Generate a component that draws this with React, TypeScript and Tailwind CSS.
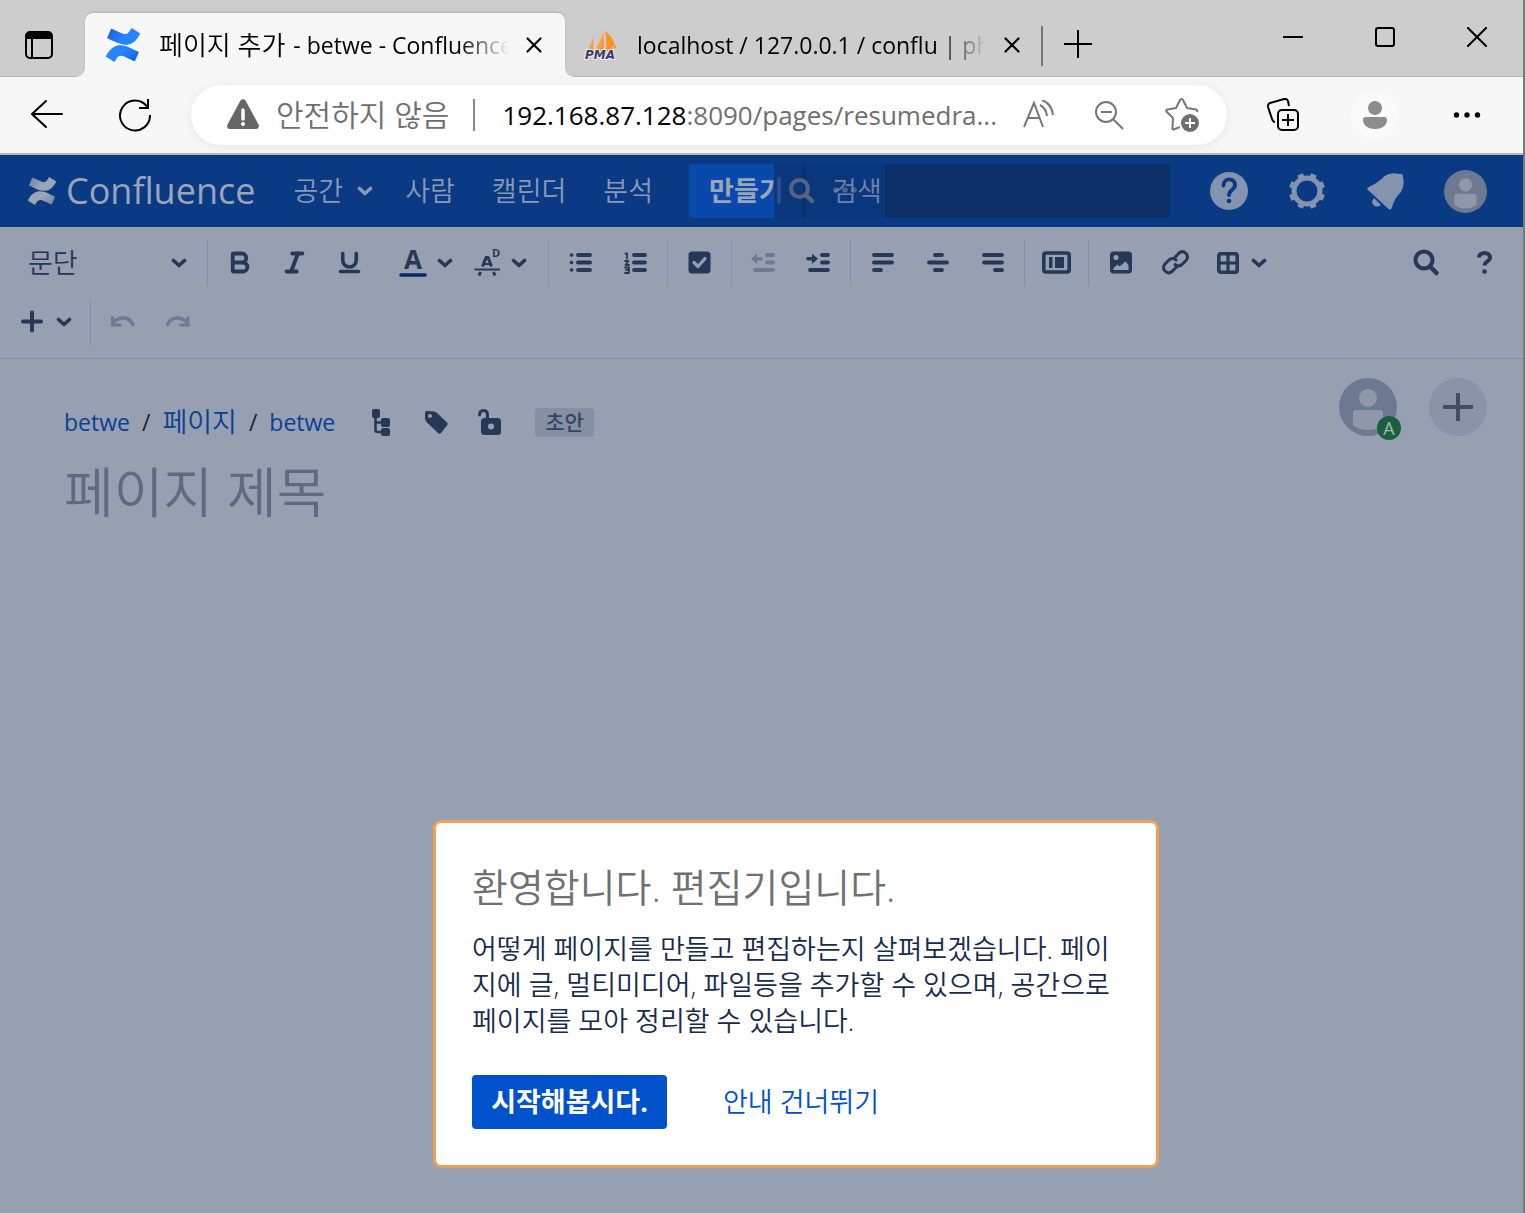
/*
 * Browser window with the Confluence editor and its welcome dialog
 * Page colours are already dimmed by the blanket behind the dialog
 */
import type { ReactNode } from "react";
import { Bold, Italic, Underline, X } from "lucide-react";
import { SiConfluence } from "react-icons/si";

const INK = "#253858";

function Chevron({ className = "" }: { className?: string }) {
  return (
    <svg width="16" height="16" viewBox="0 0 16 16" fill="none" className={className}>
      <path d="M2.5 5.5 8 10.5l5.5-5" stroke="currentColor" strokeWidth="3.6" strokeLinecap="round" strokeLinejoin="round" />
    </svg>
  );
}

function Icon({ children, size = 27 }: { children: ReactNode; size?: number }) {
  return (
    <svg width={size} height={size} viewBox={`0 0 ${size} ${size}`} fill="none" stroke="currentColor" strokeLinecap="round" strokeLinejoin="round" className="overflow-visible">
      {children}
    </svg>
  );
}

function ToolButton({ label, disabled, children }: { label: string; disabled?: boolean; children: ReactNode }) {
  return (
    <button
      type="button"
      aria-label={label}
      disabled={disabled}
      className="flex h-[59px] w-[55px] items-center justify-center disabled:text-[#707a8c]"
    >
      {children}
    </button>
  );
}

function ToolMenu({ label, children }: { label: string; children: ReactNode }) {
  return (
    <button type="button" aria-label={label} className="flex h-[59px] w-[74px] items-center justify-between px-2.5">
      {children}
      <Chevron />
    </button>
  );
}

function Divider() {
  return <span className="mx-1 h-[46px] w-px bg-[#8590a3]" />;
}

function Person({ size, bg, fg }: { size: number; bg: string; fg: string }) {
  return (
    <svg width={size} height={size} viewBox="0 0 58 58">
      <circle cx="29" cy="29" r="29" fill={bg} />
      <circle cx="29" cy="20" r="9" fill={fg} />
      <path d="M14 35a3 3 0 0 1 3-3h24a3 3 0 0 1 3 3v12q-6 5-15 5t-15-5z" fill={fg} />
    </svg>
  );
}

function PmaLogo() {
  return (
    <svg width="34" height="36" viewBox="0 0 34 36">
      <defs>
        <linearGradient id="sail" x1="0" y1="0" x2="1" y2="1">
          <stop offset="0" stopColor="#fcc68c" />
          <stop offset="1" stopColor="#f98b1d" />
        </linearGradient>
      </defs>
      <path d="M9 8Q10 16 9 24H3Q8 17 9 8z" fill="url(#sail)" />
      <path d="M19 3Q21 14 19 24H10Q17 14 19 3z" fill="url(#sail)" />
      <path d="M21 4Q29 10 30 16l3 6-5-3 1 5h-7Q23 13 21 4z" fill="#ff9320" />
      <text x="1" y="32" fontSize="12" fontWeight="700" fontStyle="italic" fontFamily="DejaVu Sans, sans-serif" fill="#3d3866" stroke="#eee" strokeWidth="2" paintOrder="stroke">
        PMA
      </text>
    </svg>
  );
}

function TabStrip() {
  return (
    <div className="flex h-[77px] border-b border-[#b8b8b8] bg-[#cdcdcd] pr-9 text-black">
      <button type="button" aria-label="탭 작업 메뉴" className="mt-[31px] ml-[25px] h-7 w-7">
        <svg width="28" height="28" viewBox="0 0 28 28">
          <rect x="1" y="1" width="26" height="26" rx="4" fill="none" stroke="#000" strokeWidth="2" />
          <path d="M1 8V5a4 4 0 0 1 4-4h18a4 4 0 0 1 4 4v3zM6 7h2v20H6z" fill="#000" />
        </svg>
      </button>
      <div className="relative mt-[13px] ml-8 flex h-16 w-[480px] items-center rounded-t-lg bg-[#f7f7f7] pl-[21px] shadow-[0_-1px_2px_rgba(0,0,0,0.15)]">
        <span className="absolute bottom-0 -left-2 h-2 w-2 bg-[radial-gradient(circle_at_0_0,transparent_7px,#f7f7f7_8px)]" />
        <span className="absolute -right-2 bottom-0 h-2 w-2 bg-[radial-gradient(circle_at_100%_0,transparent_7px,#f7f7f7_8px)]" />
        <SiConfluence size={34} fill="url(#logo-blue)" />
        <span className="ml-[19px] flex h-9 w-[350px] items-center gap-2 text-[23px] leading-9 whitespace-nowrap [mask-image:linear-gradient(to_right,#000_300px,transparent_350px)]">
          <span className="text-[26px] font-[350]">페이지 추가</span>
          <span>- betwe - Confluence</span>
        </span>
        <button type="button" aria-label="탭 닫기" className="ml-3">
          <X size={26} strokeWidth={2} />
        </button>
      </div>
      <div className="mt-[13px] ml-[19px] flex h-16 items-center">
        <PmaLogo />
        <span className="ml-[19px] h-9 w-[350px] text-[23px] leading-9 whitespace-nowrap [mask-image:linear-gradient(to_right,#000_300px,transparent_350px)]">
          localhost / 127.0.0.1 / conflu | php
        </span>
        <button type="button" aria-label="탭 닫기" className="ml-3">
          <X size={26} strokeWidth={2} />
        </button>
      </div>
      <span className="mt-[26px] ml-4 h-10 w-0.5 bg-[#777]" />
      <button type="button" aria-label="새 탭" className="mt-[30px] ml-5 h-7 w-8">
        <svg width="30" height="28" viewBox="0 0 30 28" stroke="#000" strokeWidth="2">
          <path d="M1 14h28M15 0v28" />
        </svg>
      </button>
      <div className="mt-[27px] ml-auto flex h-5 gap-[72px]">
        <button type="button" aria-label="최소화">
          <svg width="20" height="20" stroke="#000" strokeWidth="2"><path d="M0 10h20" /></svg>
        </button>
        <button type="button" aria-label="최대화">
          <svg width="20" height="20" fill="none" stroke="#000" strokeWidth="2"><rect x="1" y="1" width="18" height="18" rx="2" /></svg>
        </button>
        <button type="button" aria-label="닫기">
          <svg width="20" height="20" stroke="#000" strokeWidth="2"><path d="M0 0l20 20M20 0L0 20" /></svg>
        </button>
      </div>
    </div>
  );
}

function AddressBar() {
  return (
    <div className="flex h-[78px] items-center border-b-2 border-[#b9b9b9] bg-[#f7f7f7] pr-[42px] pl-[31px] text-black">
      <button type="button" aria-label="뒤로">
        <svg width="32" height="30" viewBox="0 0 32 30" fill="none" stroke="#000" strokeWidth="2" strokeLinecap="round">
          <path d="M31 14H1M15 1 1 14l14 13" />
        </svg>
      </button>
      <button type="button" aria-label="새로 고침" className="ml-14">
        <svg width="32" height="34" viewBox="0 0 32 34" fill="none" stroke="#000" strokeWidth="2">
          <path d="M28 8.500A15 15 0 1 0 31 17M29 1v9H20" />
        </svg>
      </button>
      <div className="ml-10 flex h-[60px] flex-1 items-center rounded-full bg-white pr-[28px] pl-9 text-[#6f6f6f] shadow-[0_1px_10px_rgba(0,0,0,0.08)]">
        <svg width="32" height="32" viewBox="0 0 32 32">
          <path d="M13.500 1.500a3 3 0 0 1 5 0l13 24a3 3 0 0 1-2.500 4.500H3a3 3 0 0 1-2.500-4.500z" fill="#666" />
          <path d="M16 11v9" stroke="#fff" strokeWidth="3.500" strokeLinecap="round" />
          <circle cx="16" cy="25" r="2" fill="#fff" />
        </svg>
        <span className="ml-[17px] text-[30px] leading-9 font-[350]">안전하지 않음</span>
        <span className="ml-6 h-8 w-0.5 bg-[#8a8a8a]" />
        <span className="ml-[27px] flex-1 text-[26px] leading-9 whitespace-nowrap">
          <span className="text-black">192.168.87.128</span>:8090/pages/resumedra...
        </span>
        <div className="flex items-center gap-10">
          <button type="button" aria-label="소리내어 읽기">
            <svg width="32" height="30" viewBox="0 0 32 30" fill="none" stroke="#777" strokeWidth="2">
              <path d="M1 27 11 3l9 24M5 18h12" />
              <path d="M17 5q6 3 7 11M19 0q10 4 11 15" />
            </svg>
          </button>
          <button type="button" aria-label="축소">
            <svg width="30" height="30" viewBox="0 0 30 30" fill="none" stroke="#777" strokeWidth="2">
              <circle cx="11" cy="12" r="10" />
              <path d="M18 19l10 10M6 12h11" />
            </svg>
          </button>
          <button type="button" aria-label="즐겨찾기에 추가">
            <svg width="34" height="34" viewBox="0 0 34 34" fill="none" stroke="#777" strokeWidth="2" strokeLinejoin="round">
              <path d="M15 29l-6.500 2.500q-1.500 0-1-2L8 20 1.500 13.500q-1-1.500 1-2L11 10l4-8q1.500-2 3 0l4 8 9 1.500q2 1 1 2.500" />
              <circle cx="25" cy="25" r="9" fill="#6f6f6f" stroke="none" />
              <path d="M25 20v10M20 25h10" stroke="#fff" />
            </svg>
          </button>
        </div>
      </div>
      <button type="button" aria-label="컬렉션" className="ml-10">
        <svg width="33" height="34" viewBox="0 0 33 34" fill="none" stroke="#000" strokeWidth="2" strokeLinejoin="round">
          <rect x="11" y="12" width="20" height="20" rx="4" />
          <path d="M21 16v12M15 22h12M8 24q-2 0-3-3L1 9q-.5-3 2-4L17 1q3-.5 4 2l1 5" />
        </svg>
      </button>
      <button type="button" aria-label="프로필" className="ml-[51px] flex h-12 w-12 items-center justify-center rounded-full bg-[#fafafa]">
        <svg width="24" height="28" viewBox="0 0 24 28" fill="#8c8c8c">
          <circle cx="12" cy="7" r="7" />
          <path d="M3 16h18a3 3 0 0 1 3 3c0 6-6 9-12 9s-12-3-12-9a3 3 0 0 1 3-3z" />
        </svg>
      </button>
      <button type="button" aria-label="설정 및 기타" className="ml-[54px]">
        <svg width="28" height="6" viewBox="0 0 28 6">
          <circle cx="3.500" cy="3" r="2.700" />
          <circle cx="14" cy="3" r="2.700" />
          <circle cx="24.500" cy="3" r="2.700" />
        </svg>
      </button>
    </div>
  );
}

function AppHeader() {
  return (
    <header className="flex h-[72px] items-center bg-[#0a3a84] pr-9 pl-7 text-[27px] leading-9 whitespace-nowrap text-[#8a99b5]">
      <a href="#home" className="flex items-center text-[#9aa5b8]">
        <SiConfluence size={28} fill="url(#logo-grey)" />
        <span className="ml-2.5 text-[36px]">Confluence</span>
      </a>
      <nav className="flex shrink-0 items-center font-[350]">
        <a href="#spaces" className="ml-[38px] flex items-center gap-3.5">
          공간
          <Chevron />
        </a>
        <a href="#people" className="ml-8">사람</a>
        <a href="#calendars" className="ml-[37px]">캘린더</a>
        <a href="#analytics" className="ml-[37px]">분석</a>
        <button type="button" className="ml-9 h-[54px] w-[85px] rounded-l bg-[#0a49ac] pl-5 text-left font-bold text-[#9aa5b8]">
          만들기
        </button>
      </nav>
      <form className="relative h-[54px] w-[396px] shrink-0">
        <span className="absolute inset-y-0 right-0 left-[111px] rounded-r bg-[#0d2f67]" />
        <button type="button" aria-label="더 보기" className="absolute inset-y-0 left-0 w-[111px] rounded bg-[#0a367a]/75">
          <svg width="111" height="54" viewBox="0 0 111 54">
            <path d="M30 0v54" stroke="#0d2f67" strokeWidth="2" />
            <g fill="#4e6288">
              <circle cx="62" cy="26" r="2.800" />
              <circle cx="71" cy="26" r="2.800" />
              <circle cx="80" cy="26" r="2.800" />
            </g>
          </svg>
        </button>
        <svg width="26" height="26" viewBox="0 0 26 26" fill="none" stroke="#56647f" className="absolute top-3.5 left-[15px]">
          <circle cx="10.500" cy="10.500" r="8.500" strokeWidth="4" />
          <path d="M17.500 17.500 23 23" strokeWidth="4.500" strokeLinecap="round" />
        </svg>
        <input
          type="text"
          aria-label="검색"
          placeholder="검색"
          className="absolute inset-0 w-full bg-transparent pl-[58px] font-[350] outline-none placeholder:text-[#6e83aa]"
        />
      </form>
      <div className="ml-auto flex items-center gap-10">
        <button type="button" aria-label="도움말">
          <svg width="38" height="38" viewBox="0 0 38 38" fill="none">
            <circle cx="19" cy="19" r="19" fill="#8493ae" />
            <path d="M13.500 13.500c0-8 11.500-8 11.500-.5 0 5-6 4.500-6 10" stroke="#0a3a84" strokeWidth="3.800" strokeLinecap="round" />
            <circle cx="19" cy="29" r="2.300" fill="#0a3a84" />
          </svg>
        </button>
        <button type="button" aria-label="설정">
          <svg width="38" height="38" viewBox="0 0 38 38" fill="none" stroke="#8493ae">
            <circle cx="19" cy="19" r="13" strokeWidth="5" />
            <path
              d="M14.400 7.900 12.100 2.300M23.600 7.900 25.900 2.300M30.100 14.400 35.700 12.100M30.100 23.600 35.700 25.900M23.600 30.100 25.900 35.700M14.400 30.100 12.100 35.700M7.900 23.600 2.300 25.900M7.900 14.400 2.300 12.100"
              strokeWidth="6"
              strokeLinecap="butt"
            />
          </svg>
        </button>
        <button type="button" aria-label="알림">
          <svg width="38" height="38" viewBox="0 0 38 38" fill="#8493ae">
            <path d="M2 15.500q12-6 16-11Q25-.5 33 2q4-1 4 3 2 8-2 15-6 5-9.500 16.500-1.500 2-3 .5L2 18q-1.500-1.500 0-2.500z" />
            <path d="M8 26l7 7q-4 3-7.500 0Q4.500 30 8 26z" />
          </svg>
        </button>
        <button type="button" aria-label="사용자 메뉴">
          <Person size={43} bg="#6d7990" fg="#8f98a9" />
        </button>
      </div>
    </header>
  );
}

function EditorToolbar() {
  return (
    <div className="border-b border-[#8490a2] pt-1.5 pb-[7px] text-[#253858]">
      <div className="flex items-center">
        <button type="button" className="flex h-[59px] w-[203px] items-center justify-between pr-4 pl-7 text-[27px] leading-9 font-[350]">
          문단
          <Chevron />
        </button>
        <Divider />
        <ToolButton label="굵게"><Bold size={27} strokeWidth={3.400} /></ToolButton>
        <ToolButton label="기울임"><Italic size={27} strokeWidth={3.400} /></ToolButton>
        <ToolButton label="밑줄"><Underline size={27} strokeWidth={3.200} /></ToolButton>
        <div className="mr-[7px] ml-3 flex">
          <ToolMenu label="글자 색">
            <Icon size={28}>
              <text x="14" y="20" textAnchor="middle" fontSize="26" fontWeight="700" fill={INK} stroke="none">A</text>
              <path d="M2 26h24" stroke="#052c61" strokeWidth="3.600" />
            </Icon>
          </ToolMenu>
          <ToolMenu label="서식 더 보기">
            <Icon size={28}>
              <path d="M9.500 17.500 13 8.500h2l3.500 9" strokeWidth="3" strokeLinecap="butt" />
              <path d="M11.500 15h5" strokeWidth="2" />
              <path d="M6 26.500 7.500 23M20.500 23l1.500 3.500" strokeWidth="3" strokeLinecap="butt" />
              <path d="M1.500 20.500h25.500" strokeWidth="2" strokeLinecap="butt" />
              <text x="19" y="8" fontSize="11" fontWeight="700" fill={INK} stroke="none">D</text>
            </Icon>
          </ToolMenu>
        </div>
        <Divider />
        <ToolButton label="글머리 기호 목록">
          <Icon>
            <path d="M11 6h12M11 13.500h12M11 21h12" strokeWidth="3.800" />
            <path d="M4.500 6h.1M4.500 13.500h.1M4.500 21h.1" strokeWidth="3.600" />
          </Icon>
        </ToolButton>
        <ToolButton label="번호 매기기 목록">
          <Icon>
            <path d="M12 6h11M12 13.500h11M12 21h11" strokeWidth="3.800" />
            <path d="M3.500 4.500H5v5M3 12h3.500l-3 4h3.500M3 18.500h4v5.500H3M4 21h3" strokeWidth="1.800" />
          </Icon>
        </ToolButton>
        <Divider />
        <ToolButton label="작업 목록">
          <Icon>
            <rect x="2.500" y="2.500" width="22" height="22" rx="3.500" fill={INK} stroke="none" />
            <path d="M8 13.500l4 4 7-8" stroke="#97a0b0" strokeWidth="3.200" />
          </Icon>
        </ToolButton>
        <Divider />
        <ToolButton label="내어쓰기" disabled>
          <Icon>
            <path d="M17 6h6M17 13.500h6M5 21h18" strokeWidth="3.800" />
            <path d="M6 9.800h5" strokeWidth="3.600" />
            <path d="M7 4.500v10.500L1 9.800z" fill="currentColor" stroke="none" />
          </Icon>
        </ToolButton>
        <ToolButton label="들여쓰기">
          <Icon>
            <path d="M17 6h6M17 13.500h6M5 21h18" strokeWidth="3.800" />
            <path d="M3 9.800h5" strokeWidth="3.600" />
            <path d="M7 4.500v10.500l6-5.200z" fill="currentColor" stroke="none" />
          </Icon>
        </ToolButton>
        <Divider />
        <ToolButton label="왼쪽 정렬">
          <Icon><path d="M5 6h18M5 13.500h18M5 21h7" strokeWidth="3.800" /></Icon>
        </ToolButton>
        <ToolButton label="가운데 정렬">
          <Icon><path d="M11 6h7M5 13.500h18M11 21h7" strokeWidth="3.800" /></Icon>
        </ToolButton>
        <ToolButton label="오른쪽 정렬">
          <Icon><path d="M5 6h18M5 13.500h18M16 21h7" strokeWidth="3.800" /></Icon>
        </ToolButton>
        <Divider />
        <ToolButton label="페이지 레이아웃">
          <Icon size={29}>
            <rect x="1.800" y="5" width="25.400" height="19" rx="2" strokeWidth="3.600" />
            <path d="M7 9h3.500v11H7zM13 9h9v11h-9z" fill={INK} stroke="none" />
          </Icon>
        </ToolButton>
        <Divider />
        <ToolButton label="파일 및 이미지">
          <Icon>
            <rect x="3" y="2.500" width="22" height="22" rx="3.500" fill={INK} stroke="none" />
            <circle cx="9" cy="8.500" r="2.500" fill="#97a0b0" stroke="none" />
            <path d="M6.500 21v-2l4-3.500 2 2 6-5 3 3.500v5z" fill="#97a0b0" stroke="none" />
          </Icon>
        </ToolButton>
        <ToolButton label="링크">
          <Icon>
            <g strokeWidth="3">
              <path d="M12 9.500l5-5.500q3.500-3 7 .500 3 3.500 0 7l-4 4q-3.500 3-7 0" />
              <path d="M15 17.500l-5 5q-3.500 3-7-.500-3-3.500 0-7l4-4q3.500-3 7 0" />
            </g>
          </Icon>
        </ToolButton>
        <ToolMenu label="표">
          <Icon size={28}>
            <rect x="5.800" y="4.800" width="18.400" height="18.400" rx="2" strokeWidth="3.600" />
            <path d="M15 5v18M6 14h18" strokeWidth="3.200" />
          </Icon>
        </ToolMenu>
        <div className="mr-[11px] ml-auto flex gap-1">
          <ToolButton label="찾기 및 바꾸기">
            <Icon>
              <circle cx="12" cy="11" r="8.500" strokeWidth="4" />
              <path d="M19 18.500 24.500 24" strokeWidth="4.500" />
            </Icon>
          </ToolButton>
          <ToolButton label="도움말">
            <Icon>
              <path d="M8 8.500c0-6 11-6 11 0 0 4-5.500 4-5.500 8" strokeWidth="4" strokeLinecap="butt" />
              <path d="M13.500 22.500h.1" strokeWidth="4.600" />
            </Icon>
          </ToolButton>
        </div>
      </div>
      <div className="flex items-center">
        <button type="button" aria-label="삽입" className="flex h-[59px] w-[86px] items-center gap-[11px] pl-[18px]">
          <Icon><path d="M5 13.500h18M14 4.500v18" strokeWidth="4" /></Icon>
          <Chevron />
        </button>
        <Divider />
        <ToolButton label="실행 취소" disabled>
          <Icon>
            <path d="M4 14.500q5-4.500 10-4.500 7 0 10 6.500" strokeWidth="3.400" />
            <path d="M3.500 9.500V17H11" strokeWidth="3.200" />
          </Icon>
        </ToolButton>
        <ToolButton label="다시 실행" disabled>
          <Icon>
            <path d="M3.500 16.500q3-6.500 10-6.500 5 0 10 4.500" strokeWidth="3.400" />
            <path d="M24 9.500V17H16.500" strokeWidth="3.200" />
          </Icon>
        </ToolButton>
      </div>
    </div>
  );
}

function PageHead() {
  return (
    <div className="pr-9 pl-16">
      <div className="flex items-start justify-between pt-[19px]">
        <div className="mt-[26px] flex items-center text-[#253858]">
          <nav aria-label="위치" className="flex items-center gap-3 text-[23px] leading-9 text-[#0a3f96]">
            <a href="#space">betwe</a>
            <span className="text-[#20242e]">/</span>
            <a href="#pages" className="text-[27px] font-[350]">페이지</a>
            <span className="text-[#20242e]">/</span>
            <a href="#parent">betwe</a>
          </nav>
          <div className="ml-[34px] flex items-center gap-[27px]">
            <button type="button" aria-label="페이지 위치">
              <Icon>
                <g fill={INK} stroke="none">
                  <rect x="3" y="0" width="8" height="9" rx="2" />
                  <rect x="12" y="9" width="9" height="9" rx="2" />
                  <rect x="12" y="19" width="9" height="8" rx="2" />
                </g>
                <path d="M6.500 8v13q0 2 2 2H13M7 13.500h6" strokeWidth="2.600" />
              </Icon>
            </button>
            <button type="button" aria-label="레이블">
              <Icon>
                <path d="M2 4q0-2 2-2l7 .500q1.500 0 3 1.500l10 9.500q1.500 1.500 0 3l-6 7.500q-1.500 1.500-3 0L3.500 13Q2 11 2 9z" fill={INK} stroke="none" />
                <circle cx="7" cy="7" r="2" fill="#97a0b0" stroke="none" />
              </Icon>
            </button>
            <button type="button" aria-label="제한 없음">
              <Icon>
                <rect x="4" y="9" width="20" height="17" rx="3.500" fill={INK} stroke="none" />
                <circle cx="14" cy="17.500" r="3" fill="#97a0b0" stroke="none" />
                <path d="M2.500 6q0-4.500 4-4.500t4 4.500v5" strokeWidth="3" />
              </Icon>
            </button>
          </div>
          <span className="ml-[31px] h-[29px] rounded bg-[#8590a2] px-2.5 text-[21px] leading-7 font-medium text-[#344563]">초안</span>
        </div>
        <div className="flex gap-8">
          <div className="relative h-[58px] w-[58px]">
            <Person size={58} bg="#6d7990" fg="#8f98a9" />
            <span className="absolute -right-1 -bottom-1 h-6 w-6 rounded-full bg-[#1c5f40] text-center text-[18px] leading-6 text-[#a3b5b3]">A</span>
          </div>
          <button type="button" aria-label="사용자 초대" className="flex h-[58px] w-[58px] items-center justify-center rounded-full bg-[#8b93a6]">
            <svg width="30" height="30" viewBox="0 0 30 30" stroke="#454e61" strokeWidth="4"><path d="M0 15h30M15 1v28" /></svg>
          </button>
        </div>
      </div>
      <input
        type="text"
        aria-label="페이지 제목"
        placeholder="페이지 제목"
        className="mt-3 h-[80px] w-full bg-transparent text-[54px] font-[350] outline-none placeholder:text-[#606a7c]"
      />
    </div>
  );
}

function WelcomeDialog() {
  return (
    <div
      role="dialog"
      aria-labelledby="welcome-title"
      className="absolute top-[820px] left-[433px] w-[726px] rounded-lg border-3 border-[#f0a055] bg-white px-9 pt-9 pb-9 text-[#172b4d]"
    >
      <h2 id="welcome-title" className="text-[39px] leading-[56px] font-[350] text-[#707070]">환영합니다. 편집기입니다.</h2>
      <p className="mt-4 text-[27px] leading-9 font-[350]">
        어떻게 페이지를 만들고 편집하는지 살펴보겠습니다. 페이지에 글, 멀티미디어, 파일등을 추가할 수 있으며, 공간으로 페이지를 모아 정리할 수 있습니다.
      </p>
      <div className="mt-9 flex h-[54px] items-center text-[27px] leading-9">
        <button type="button" className="h-full w-[195px] rounded bg-[#0052cc] font-bold whitespace-nowrap text-white">
          시작해봅시다.
        </button>
        <a href="#skip" className="ml-14 font-[350] text-[#0052cc]">안내 건너뛰기</a>
      </div>
    </div>
  );
}

export default function App() {
  return (
    <div className="relative flex min-h-screen flex-col border-r-2 border-[#7a7a7a] bg-[#97a0b0] font-['Open_Sans','Noto_Sans_CJK_KR',sans-serif]">
      <svg width="0" height="0" className="absolute">
        <defs>
          <linearGradient id="logo-blue" x1="0" y1="0" x2="1" y2="1">
            <stop offset="0" stopColor="#0d5bd3" />
            <stop offset="0.4" stopColor="#2684ff" />
            <stop offset="0.6" stopColor="#2684ff" />
            <stop offset="1" stopColor="#0d5bd3" />
          </linearGradient>
          <linearGradient id="logo-grey" x1="0" y1="0" x2="1" y2="1">
            <stop offset="0" stopColor="#6b7fa6" />
            <stop offset="0.4" stopColor="#9aa5b8" />
            <stop offset="0.6" stopColor="#9aa5b8" />
            <stop offset="1" stopColor="#6b7fa6" />
          </linearGradient>
        </defs>
      </svg>
      <TabStrip />
      <AddressBar />
      <AppHeader />
      <main className="flex-1">
        <EditorToolbar />
        <PageHead />
      </main>
      <WelcomeDialog />
    </div>
  );
}
